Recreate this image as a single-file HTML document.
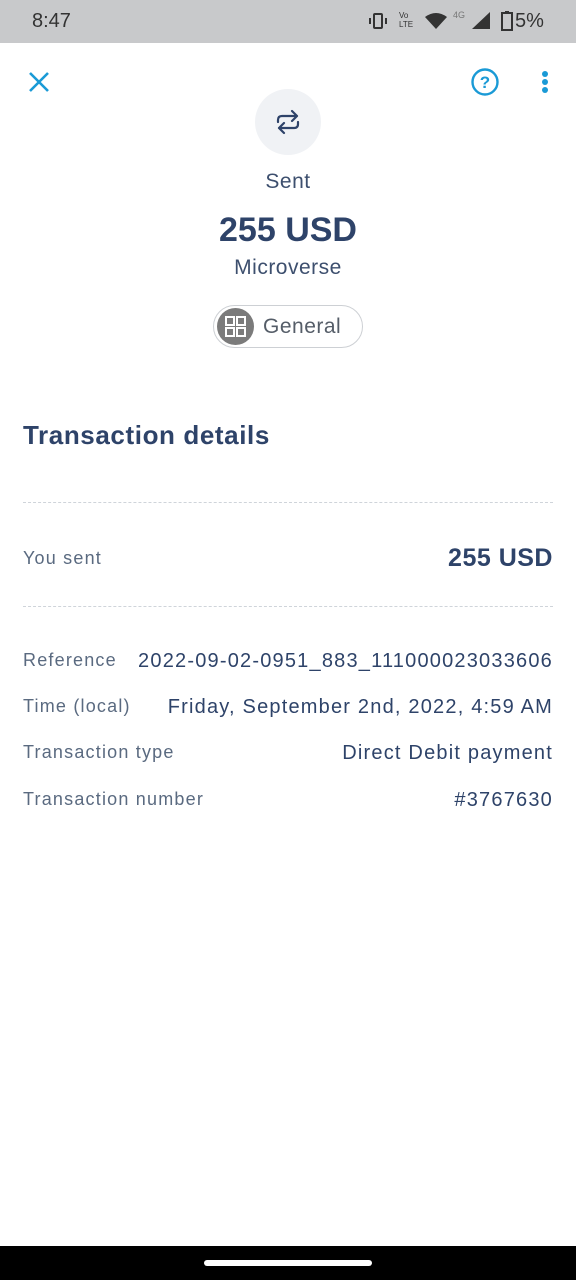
<!DOCTYPE html>
<html><head><meta charset="utf-8"><style>
*{margin:0;padding:0;box-sizing:border-box}
body{width:576px;height:1280px;background:#fff;font-family:"Liberation Sans",sans-serif;position:relative;overflow:hidden;color:#2e4369}
.sb{position:absolute;top:0;left:0;width:576px;height:43px;background:#c8c9cb;color:#333}
.abs{position:absolute}
.row{position:absolute;left:23px;right:23px;display:flex;justify-content:space-between;font-size:20px;color:#2e4369;letter-spacing:1.2px;white-space:nowrap}
.row .l{color:#5a6a80;font-size:18px;letter-spacing:1.2px}
.dash{position:absolute;left:23px;right:23px;border-top:1.5px dashed #cfd4da}
</style></head><body>
<div class="sb">
<div class="abs" style="left:32px;top:10px;font-size:20px">8:47</div>
<svg class="abs" style="left:368px;top:12px" width="20" height="18"><rect x="6" y="2" width="8" height="14" rx="1" fill="none" stroke="#333" stroke-width="2"/><path d="M2 6V12M18 6V12" stroke="#333" stroke-width="2"/></svg>
<div class="abs" style="left:399px;top:11px;font-size:8px;line-height:9px">Vo<br>LTE</div>
<svg class="abs" style="left:424px;top:12px" width="24" height="18"><path d="M1 5Q12-3 23 5L12 17Z" fill="#333"/></svg>
<div class="abs" style="left:453px;top:10px;font-size:9px;color:#777">4G</div>
<svg class="abs" style="left:471px;top:12px" width="20" height="18"><path d="M19 0V17H1Z" fill="#333"/></svg>
<svg class="abs" style="left:500px;top:10px" width="14" height="22"><rect x="2" y="3" width="10" height="17" fill="none" stroke="#333" stroke-width="2"/><rect x="5" y="1" width="4" height="2" fill="#333"/></svg>
<div class="abs" style="left:515px;top:10px;font-size:20px">5%</div>
</div>
<svg class="abs" style="left:28px;top:71px" width="22" height="22"><path d="M2 2L20 20M20 2L2 20" stroke="#1a9ad6" stroke-width="2.6"/></svg>
<svg class="abs" style="left:470px;top:67px" width="30" height="30"><circle cx="15" cy="15" r="12.5" fill="none" stroke="#1a9ad6" stroke-width="2.4"/><text x="15" y="21" font-size="17" font-weight="bold" text-anchor="middle" fill="#1a9ad6" font-family="Liberation Sans">?</text></svg>
<svg class="abs" style="left:538px;top:70px" width="14" height="26"><circle cx="7" cy="4" r="3" fill="#1a9ad6"/><circle cx="7" cy="12" r="3" fill="#1a9ad6"/><circle cx="7" cy="20" r="3" fill="#1a9ad6"/></svg>
<div class="abs" style="left:255px;top:89px;width:66px;height:66px;border-radius:50%;background:#f0f2f5"></div>
<svg class="abs" style="left:274px;top:108px" width="28" height="28"><path d="M4 14V12Q4 8 8 8H23M18 3L23 8L18 13M24 14V16Q24 20 20 20H5M10 15L5 20L10 25" fill="none" stroke="#2e4369" stroke-width="2.2" stroke-linecap="round" stroke-linejoin="round"/></svg>
<div class="abs" style="left:0;width:576px;top:170px;text-align:center;font-size:21px;color:#3d4f6e;letter-spacing:0.5px">Sent</div>
<div class="abs" style="left:0;width:576px;top:211px;text-align:center;font-size:34px;font-weight:bold">255 USD</div>
<div class="abs" style="left:0;width:576px;top:256px;text-align:center;font-size:21px;color:#3d4f6e;letter-spacing:0.5px">Microverse</div>
<div class="abs" style="left:213px;top:305px;width:150px;height:43px;border:1.5px solid #cdd0d4;border-radius:22px"></div>
<div class="abs" style="left:217px;top:308px;width:37px;height:37px;border-radius:50%;background:#7b7b7b"></div>
<svg class="abs" style="left:223px;top:314px" width="26" height="26"><g fill="none" stroke="#fff" stroke-width="2"><rect x="3" y="3" width="8" height="8"/><rect x="14" y="3" width="8" height="8"/><rect x="3" y="14" width="8" height="8"/><rect x="14" y="14" width="8" height="8"/></g></svg>
<div class="abs" style="left:263px;top:315px;font-size:21px;color:#555d68;letter-spacing:0.5px">General</div>
<div class="abs" style="left:23px;top:420px;font-size:26px;font-weight:bold;letter-spacing:0.6px">Transaction details</div>
<div class="dash" style="top:502px"></div>
<div class="row" style="top:544px;align-items:center"><span class="l">You sent</span><span style="font-size:25px;font-weight:bold;letter-spacing:0.5px">255 USD</span></div>
<div class="dash" style="top:606px"></div>
<div class="row" style="top:650px"><span class="l">Reference</span><span>2022-09-02-0951_883_111000023033606</span></div>
<div class="row" style="top:696px"><span class="l">Time (local)</span><span>Friday, September 2nd, 2022, 4:59 AM</span></div>
<div class="row" style="top:742px"><span class="l">Transaction type</span><span>Direct Debit payment</span></div>
<div class="row" style="top:789px"><span class="l">Transaction number</span><span>#3767630</span></div>
<div class="abs" style="left:0;top:1246px;width:576px;height:34px;background:#000"></div>
<div class="abs" style="left:204px;top:1260px;width:168px;height:6px;border-radius:3px;background:#fff"></div>
</body></html>
